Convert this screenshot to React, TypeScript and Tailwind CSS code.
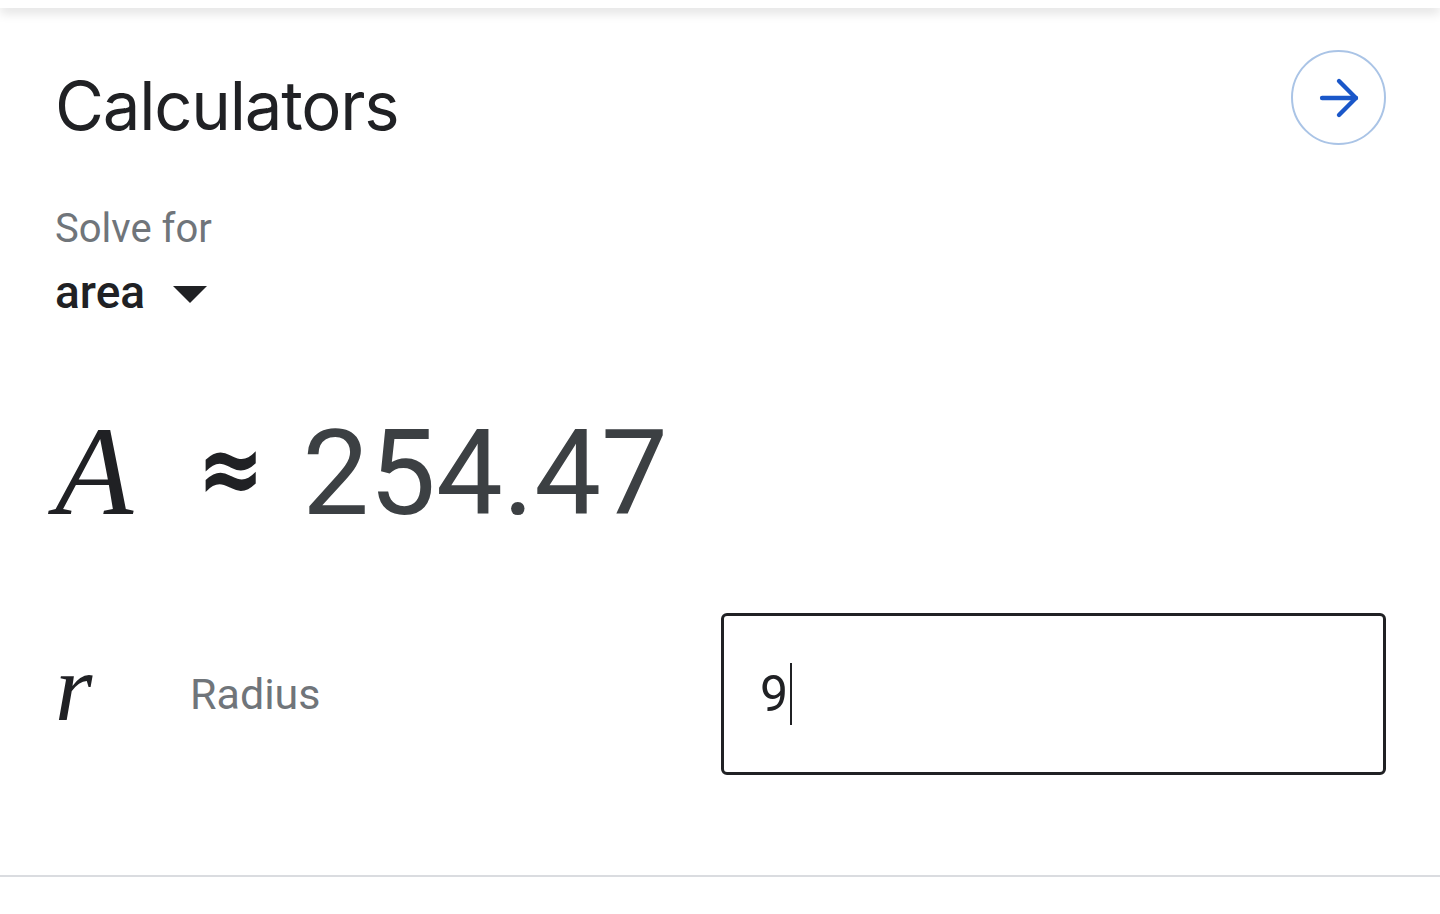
import React from 'react';
import { ArrowRight } from 'lucide-react';

const App: React.FC = () => {
  return (
    <div className="min-h-screen bg-white font-['Roboto',sans-serif]">
      <div className="relative z-10 h-2 bg-white shadow-[0_4px_12px_rgba(0,0,0,0.16)]" />

      <div className="pl-[55px] pr-[54px]">
        <div className="mt-[42px] flex items-center justify-between">
          <h1 className="mt-4 font-['Inter',sans-serif] text-[67px] leading-[70px] font-normal tracking-[-1.2px] text-[#202124]">
            Calculators
          </h1>
          <button className="flex h-[95px] w-[95px] items-center justify-center rounded-full border-2 border-[#aac4e6] bg-white">
            <ArrowRight className="h-[58px] w-[58px] text-[#1a57c9]" strokeWidth={1.8} />
          </button>
        </div>

        <div className="mt-[64px] text-[40px] leading-[40px] text-[#70757a]">Solve for</div>
        <div className="mt-[20px] flex items-center gap-[28px]">
          <span className="text-[46px] leading-[46px] font-medium text-[#202124]">area</span>
          <svg width="34" height="17" viewBox="0 0 34 17" className="mt-[4px]">
            <path d="M0 0 L34 0 L17 17 Z" fill="#202124" />
          </svg>
        </div>

        <div className="mt-[96px] flex items-baseline">
          <span className="font-['Liberation_Serif',serif] text-[128px] leading-[120px] italic text-[#202124]">A</span>
          <span className="ml-[64px] inline-block -translate-y-[18px] scale-y-125 font-['DejaVu_Sans',sans-serif] text-[80px] leading-[120px] font-bold text-[#202124]">
            ≈
          </span>
          <span className="ml-[38px] text-[119px] leading-[120px] text-[#3c4043]">254.47</span>
        </div>

        <div className="mt-[66px] flex items-center">
          <div className="flex w-[666px] items-center">
            <span className="mb-[12px] w-[135px] font-['Liberation_Serif',serif] text-[96px] leading-[96px] italic text-[#202124]">r</span>
            <span className="text-[43px] leading-[43px] text-[#70757a]">Radius</span>
          </div>
          <div className="flex h-[162px] flex-1 items-center rounded-[6px] border-[3px] border-[#202124] pl-[36px]">
            <span className="text-[50px] leading-[50px] text-[#202124]">9</span>
            <span className="ml-[2px] h-[62px] w-[2px] bg-[#202124]" />
          </div>
        </div>
      </div>

      <div className="mt-[100px] h-[2px] bg-[#dadce0]" />
    </div>
  );
};

export default App;
